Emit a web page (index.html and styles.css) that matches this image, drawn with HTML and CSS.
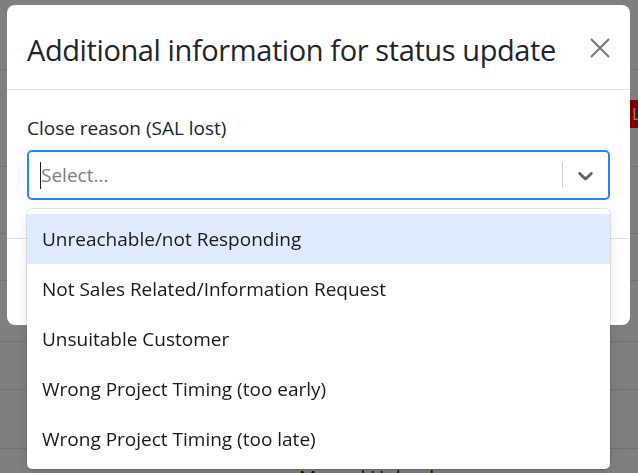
FILE: index.html
```html
<!DOCTYPE html>
<html lang="en">
<head>
  <meta charset="UTF-8" />
  <meta name="viewport" content="width=device-width, initial-scale=1" />
  <title>Status update</title>
  <link rel="stylesheet" href="styles.css">
</head>
<body>

  <!-- page behind the modal -->
  <div class="table">
    <div class="row r1"><div></div><div></div><div></div></div>
    <div class="row r2"><div></div><div></div><div><span class="badge">Lost</span></div></div>
    <div class="row r3"><div></div><div></div><div></div></div>
    <div class="row r4"><div></div><div></div><div></div></div>
    <div class="row r5"><div></div><div></div><div></div></div>
    <div class="row r6"><div></div><div></div><div></div></div>
    <div class="row r7"><div></div><div></div><div></div></div>
    <div class="row r8"><div></div><div class="cell-text">Manual Upload</div><div></div></div>
  </div>

  <div class="backdrop"></div>

  <div class="modal">
    <div class="modal-header">
      <h5 class="modal-title">Additional information for status update</h5>
      <button class="close" type="button" aria-label="Close">
        <svg width="20" height="20" viewBox="0 0 20 20">
          <path d="M1 1 L19 19 M19 1 L1 19" stroke="#7a7a7a" stroke-width="2.2" fill="none" />
        </svg>
      </button>
    </div>

    <div class="modal-body">
      <label class="form-label">Close reason (SAL lost)</label>
      <div class="select">
        <div class="select-control">
          <div class="select-value">
            <span class="caret"></span>
            <span class="placeholder">Select...</span>
          </div>
          <span class="separator"></span>
          <div class="indicator">
            <svg width="25" height="25" viewBox="0 0 20 20">
              <path fill="#666" d="M4.516 7.548c0.436-0.446 1.043-0.481 1.576 0l3.908 3.747 3.908-3.747c0.533-0.481 1.141-0.446 1.574 0 0.436 0.445 0.408 1.197 0 1.615-0.406 0.418-4.695 4.502-4.695 4.502-0.217 0.223-0.502 0.335-0.787 0.335s-0.57-0.112-0.789-0.335c0 0-4.287-4.084-4.695-4.502s-0.436-1.17 0-1.615z"></path>
            </svg>
          </div>
        </div>

        <ul class="select-menu">
          <li class="focused">Unreachable/not Responding</li>
          <li>Not Sales Related/Information Request</li>
          <li>Unsuitable Customer</li>
          <li>Wrong Project Timing (too early)</li>
          <li>Wrong Project Timing (too late)</li>
        </ul>
      </div>
    </div>

    <div class="modal-footer"></div>
  </div>

</body>
</html>
```

FILE: styles.css
```css
body {
  margin: 0;
  font-family: "Open Sans", "Noto Sans", sans-serif;
  color: #212529;
  background: #fff;
  overflow: hidden;
  height: 473px;
}
/* table behind the backdrop */
.table {
  width: 830px;
}
.row {
  display: grid;
  grid-template-columns: 282px 348px 200px;
  border-bottom: 1px solid #dee2e6;
  box-sizing: border-box;
}
.r1 { height: 70px; }
.r2 { height: 97px; }
.r3 { height: 67px; }
.r4 { height: 47px; }
.r5 { height: 61px; }
.r6 { height: 48px; }
.r7 { height: 59px; }
.r8 { height: 60px; }
.r8 div:nth-child(2) {
  border-left: 1px solid #dee2e6;
}
.badge {
  display: inline-block;
  margin-top: 30px;
  height: 28px;
  line-height: 28px;
  padding: 0 2px;
  background: #ff0000;
  color: #fff;
  font-size: 17px;
}
.cell-text {
  padding: 14px 16px;
  font-size: 19px;
  line-height: 28px;
}
.backdrop {
  position: fixed;
  inset: 0;
  background: rgba(0, 0, 0, 0.5);
}
/* modal */
.modal {
  position: fixed;
  top: 5px;
  left: 7px;
  width: 623px;
  background: #fff;
  border-radius: 8px;
}
.modal-header {
  display: flex;
  align-items: center;
  justify-content: space-between;
  height: 85px;
  padding: 0 20px;
  border-bottom: 1px solid #dee2e6;
  box-sizing: border-box;
}
.modal-title {
  margin: 5px 0 0 0;
  font-size: 29px;
  font-weight: 400;
  letter-spacing: -0.4px;
  line-height: 42px;
}
.close {
  background: none;
  border: none;
  padding: 0;
  margin-top: 1px;
  width: 20px;
  height: 20px;
  cursor: pointer;
}
.close svg {
  display: block;
}
.modal-body {
  padding: 24px 20px 38px 20px;
}
.form-label {
  display: block;
  font-size: 19px;
  line-height: 28px;
  margin-bottom: 8px;
}
.select {
  position: relative;
}
.select-control {
  display: flex;
  align-items: center;
  height: 50px;
  border: 2px solid #2684ff;
  border-radius: 5px;
  box-sizing: border-box;
}
.select-value {
  flex: 1;
  display: flex;
  align-items: center;
  padding-left: 12px;
}
.caret {
  width: 1px;
  height: 27px;
  background: #222;
  margin-left: -1px;
}
.placeholder {
  color: #808080;
  font-size: 19px;
}
.separator {
  width: 1px;
  height: 26px;
  background: #ccc;
}
.indicator {
  padding: 0 10px;
  display: flex;
}
.select-menu {
  position: absolute;
  top: 59px;
  left: 0;
  right: 0;
  margin: 0;
  padding: 5px 0;
  list-style: none;
  background: #fff;
  border-radius: 5px;
  box-shadow: 0 0 0 1px rgba(0, 0, 0, 0.1), 0 5px 14px rgba(0, 0, 0, 0.1);
  z-index: 2;
}
.select-menu li {
  padding: 10px 15px;
  font-size: 19px;
  line-height: 30px;
  color: #1a1a1a;
}
.select-menu li.focused {
  background: #deebff;
}
.modal-footer {
  height: 87px;
  border-top: 1px solid #dee2e6;
  box-sizing: border-box;
}
```
